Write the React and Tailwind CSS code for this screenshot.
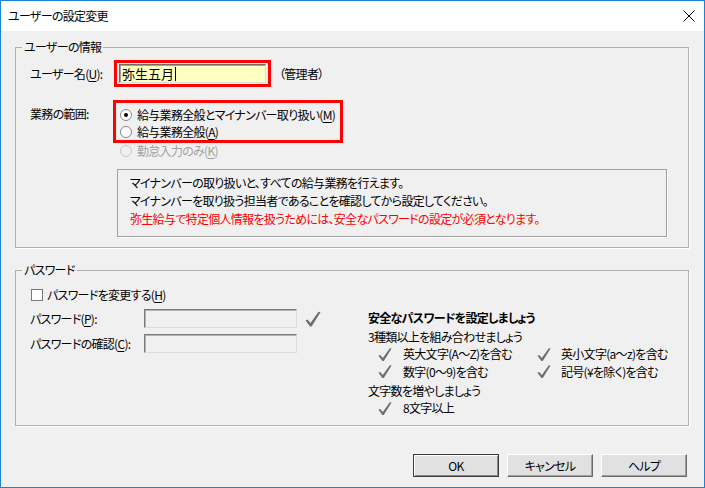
import React from "react";

// grey tick used in the password section
function Tick({ big }) {
  const w = big ? 16 : 14;
  const h = big ? 16 : 15;
  return (
    <svg width={w} height={h} viewBox="0 0 16 16" className="shrink-0">
      <path d="M0.5 9.5 L2.5 8.5 L5.5 12 L13.5 0.8 L15.5 1.2 L6.6 15.5 L5 15.5 Z" fill="#6e6e6e" />
    </svg>
  );
}

function Radio({ checked, disabled }) {
  return (
    <span
      className={
        "w-[12px] h-[12px] rounded-full border flex items-center justify-center shrink-0 " +
        (disabled ? "border-[#c8c8c8] bg-[#f0f0f0]" : "border-[#8a8a8a] bg-white")
      }
    >
      {checked && <span className="w-[4px] h-[4px] rounded-full bg-black" />}
    </span>
  );
}

function Ul({ children }) {
  return <span className="underline underline-offset-2">{children}</span>;
}

function Btn({ children, primary }) {
  return (
    <button
      className={
        "w-[86px] h-[23px] bg-[#e1e1e1] flex items-center justify-center text-[12px] text-black " +
        (primary
          ? "border border-[#3c3c3c] shadow-[inset_1px_1px_0_#ffffff,inset_-1px_-1px_0_#8a8a8a]"
          : "border border-t-white border-l-white border-r-[#6a6a6a] border-b-[#6a6a6a] shadow-[inset_-1px_-1px_0_#a0a0a0]")
      }
    >
      {children}
    </button>
  );
}

export default function App() {
  return (
    <div className="w-[705px] h-[488px] border border-[#1883d7] bg-[#f0f0f0] flex flex-col font-['Noto_Sans_CJK_JP','Noto_Sans',sans-serif] text-[12px] leading-[16px] tracking-[-0.7px] whitespace-nowrap text-black [font-feature-settings:'palt']">
      {/* title bar */}
      <div className="h-[30px] bg-white flex items-center justify-between pl-[7px] pr-[9px] shrink-0">
        <span className="text-[12px]">ユーザーの設定変更</span>
        <svg width="12" height="12" viewBox="0 0 12 12">
          <path d="M0.5 0.5 L11.5 11.5 M11.5 0.5 L0.5 11.5" stroke="#000" strokeWidth="1" />
        </svg>
      </div>

      <div className="flex flex-col pl-[14px] pr-[15px]">
        {/* user info group */}
        <fieldset className="mt-[8px] h-[209px] border border-[#b0b0b0] shadow-[1px_1px_0_#ffffff]">
          <legend className="ml-[6px] px-[2px] leading-[16px]">ユーザーの情報</legend>

          <div className="flex items-center mt-[5px] pl-[14px]">
            <span className="w-[84px]">
              ユーザー名(<Ul>U</Ul>):
            </span>
            <div className="w-[157px] h-[27px] border-[3px] border-[#ff0000] flex items-center justify-center">
              <div className="w-[147px] h-[19px] bg-[#ffffc0] border border-[#6d6d6d] border-r-[#dcdcdc] border-b-[#dcdcdc] shadow-[inset_1px_1px_0_#a0a0a0] flex items-center pl-[2px] text-[13px] tracking-normal">
                弥生五月<span className="ml-[1px] w-[1px] h-[14px] bg-black" />
              </div>
            </div>
            <span className="ml-[8px]">（管理者）</span>
          </div>

          <div className="flex mt-[13px] pl-[14px]">
            <span className="w-[83px] pt-[6px]">業務の範囲:</span>
            <div className="flex flex-col">
              <div className="w-[230px] h-[43px] border-[3px] border-[#ff0000] flex flex-col pt-[3px] pl-[4px]">
                <div className="h-[17px] flex items-center gap-[5px]">
                  <Radio checked />
                  <span>
                    給与業務全般とマイナンバー取り扱い(<Ul>M</Ul>)
                  </span>
                </div>
                <div className="h-[17px] flex items-center gap-[5px]">
                  <Radio />
                  <span>
                    給与業務全般(<Ul>A</Ul>)
                  </span>
                </div>
              </div>
              <div className="h-[15px] flex items-center gap-[5px] pl-[7px] text-[#a0a0a0]">
                <Radio disabled />
                <span>
                  勤怠入力のみ(<Ul>K</Ul>)
                </span>
              </div>
              <div className="ml-[4px] mt-[11px] w-[550px] h-[68px] border border-[#a0a0a0] shadow-[1px_1px_0_#ffffff] pt-[4px] pl-[12px] leading-[18px]">
                <div>マイナンバーの取り扱いと、すべての給与業務を行えます。</div>
                <div>マイナンバーを取り扱う担当者であることを確認してから設定してください。</div>
                <div className="text-[#ff0000]">
                  弥生給与で特定個人情報を扱うためには、安全なパスワードの設定が必須となります。
                </div>
              </div>
            </div>
          </div>
        </fieldset>

        {/* password group */}
        <fieldset className="mt-[14px] h-[164px] border border-[#b0b0b0] shadow-[1px_1px_0_#ffffff]">
          <legend className="ml-[6px] px-[2px] leading-[16px]">パスワード</legend>

          <div className="mt-[9px] h-[16px] flex items-center pl-[15px] gap-[4px]">
            <span className="w-[12px] h-[12px] bg-white border border-[#7a7a7a]" />
            <span>
              パスワードを変更する(<Ul>H</Ul>)
            </span>
          </div>

          <div className="flex mt-[6px] pl-[14px]">
            <div className="w-[338px] flex flex-col gap-[6px]">
              <div className="flex items-center h-[19px]">
                <span className="w-[114px]">
                  パスワード(<Ul>P</Ul>):
                </span>
                <span className="w-[153px] h-[19px] border border-[#7a7a7a] border-r-[#dcdcdc] border-b-[#dcdcdc] shadow-[inset_1px_1px_0_#b4b4b4]" />
                <span className="ml-[8px]">
                  <Tick big />
                </span>
              </div>
              <div className="flex items-center h-[19px]">
                <span className="w-[114px]">
                  パスワードの確認(<Ul>C</Ul>):
                </span>
                <span className="w-[153px] h-[19px] border border-[#7a7a7a] border-r-[#dcdcdc] border-b-[#dcdcdc] shadow-[inset_1px_1px_0_#b4b4b4]" />
              </div>
            </div>

            <div className="flex flex-col pt-[1px]">
              <div className="font-bold">安全なパスワードを設定しましょう</div>
              <div className="mt-[3px]">3種類以上を組み合わせましょう</div>
              <div className="flex h-[18px] items-center pl-[10px]">
                <div className="w-[159px] flex items-center gap-[11px]">
                  <Tick />
                  <span>英大文字(A～Z)を含む</span>
                </div>
                <div className="flex items-center gap-[10px]">
                  <Tick />
                  <span>英小文字(a～z)を含む</span>
                </div>
              </div>
              <div className="flex h-[17px] items-center pl-[10px]">
                <div className="w-[159px] flex items-center gap-[11px]">
                  <Tick />
                  <span>数字(0～9)を含む</span>
                </div>
                <div className="flex items-center gap-[10px]">
                  <Tick />
                  <span>記号(¥を除く)を含む</span>
                </div>
              </div>
              <div className="mt-[3px]">文字数を増やしましょう</div>
              <div className="flex h-[18px] items-center pl-[10px] gap-[11px]">
                <Tick />
                <span>8文字以上</span>
              </div>
            </div>
          </div>
        </fieldset>

        <div className="mt-[28px] flex justify-end gap-[8px] pr-[2px]">
          <Btn primary>OK</Btn>
          <Btn>キャンセル</Btn>
          <Btn>ヘルプ</Btn>
        </div>
      </div>
    </div>
  );
}
